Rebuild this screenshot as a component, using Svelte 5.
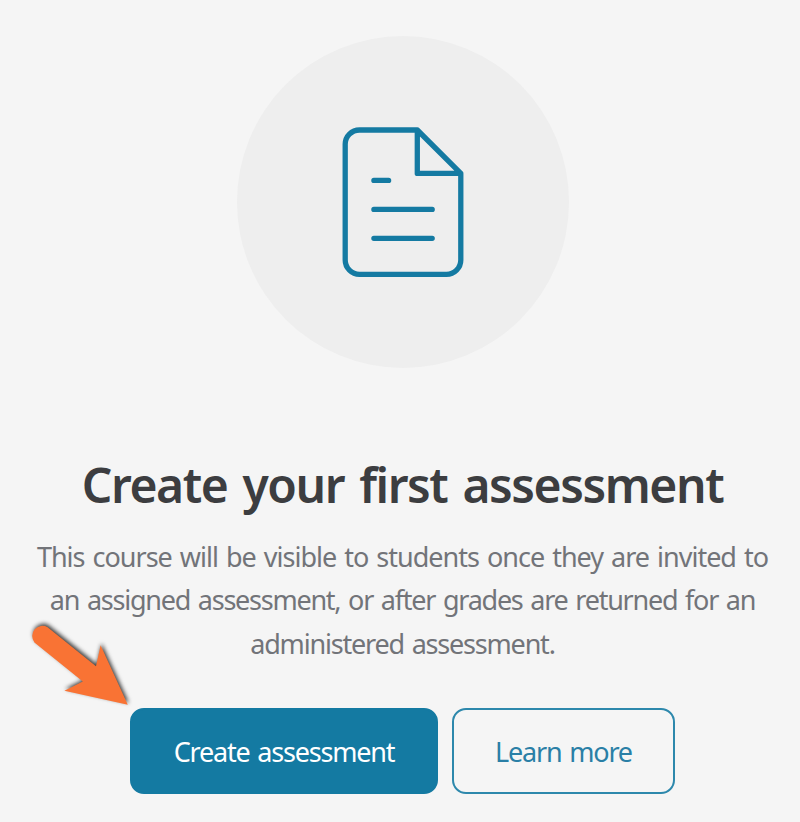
<script lang="ts">
  const heading = 'Create your first assessment';
  const lines = [
    'This course will be visible to students once they are invited to',
    'an assigned assessment, or after grades are returned for an',
    'administered assessment.'
  ];
</script>

<main class="empty-state">
  <div class="illustration">
    <svg width="150" height="175" viewBox="0 0 150 175" aria-hidden="true">
      <path d="M87.3 15H29.5A14.3 14.3 0 0 0 15.2 29.3V145A14.3 14.3 0 0 0 29.5 159.3H116.5A14.3 14.3 0 0 0 130.8 145V58.4L87.3 15V58.4H130.8" />
      <path d="M43.9 65.4H58.6M43.9 94.4H102.2M43.9 123.3H102.2" />
    </svg>
  </div>

  <h1>{heading}</h1>

  <p class="description">
    {#each lines as line}
      <span>{line}</span>
    {/each}
  </p>

  <div class="actions">
    <button class="btn primary"><span>Create assessment</span></button>
    <button class="btn outline"><span>Learn more</span></button>

    <svg class="pointer" width="130" height="110" viewBox="0 0 130 110" aria-hidden="true">
      <path d="M27.6 17.3A10.2 10.2 0 0 0 14.4 32.4L62.8 71.5L44.4 80.8L107.8 94.8L80.6 35.3L76 56.2Z" />
    </svg>
  </div>
</main>

<style>
  :global(body) {
    background: #f5f5f5;
  }

  .empty-state {
    box-sizing: border-box;
    width: 800px;
    height: 822px;
    padding: 36px 0 0 5px;
    display: flex;
    flex-direction: column;
    align-items: center;
    overflow: hidden;
    font-family: 'Segoe UI', 'Noto Sans', 'Open Sans', sans-serif;
  }

  .illustration {
    width: 332px;
    height: 332px;
    border-radius: 50%;
    background: #eee;
    display: flex;
    align-items: center;
    justify-content: center;
  }

  .illustration svg {
    margin-left: 4px;
    fill: none;
    stroke: #147aa2;
    stroke-width: 5.3;
    stroke-linecap: round;
    stroke-linejoin: round;
  }

  h1 {
    margin: 84px 0 0;
    font-size: 48px;
    line-height: 66px;
    font-weight: 600;
    letter-spacing: -1.43px;
    word-spacing: 4px;
    white-space: nowrap;
    color: #3c3d40;
  }

  .description {
    margin: 17px 0 0;
    font-size: 27px;
    line-height: 43.3px;
    letter-spacing: -1.2px;
    word-spacing: 2px;
    text-align: center;
    color: #727479;
  }

  .description span {
    display: block;
    white-space: nowrap;
  }

  .description span:nth-child(1) {
    letter-spacing: -1px;
  }

  .description span:nth-child(2) {
    letter-spacing: -1.25px;
  }

  .actions {
    position: relative;
    margin-top: 43px;
    display: flex;
    gap: 14px;
  }

  .btn {
    box-sizing: border-box;
    height: 86.5px;
    padding: 0;
    border: 2px solid #147aa2;
    border-radius: 14px;
    font: inherit;
    font-size: 27px;
    letter-spacing: -1.2px;
    word-spacing: 2px;
    white-space: nowrap;
  }

  .primary {
    width: 308px;
    background: #147aa2;
    color: #fff;
  }

  .outline {
    width: 223px;
    border-color: #2d88ac;
    background: transparent;
    color: #2a7fa6;
  }

  .pointer {
    position: absolute;
    left: -110.5px;
    top: -98px;
    fill: #f97334;
    filter: drop-shadow(1px -2px 2px rgba(0, 0, 0, 0.75));
  }
</style>
